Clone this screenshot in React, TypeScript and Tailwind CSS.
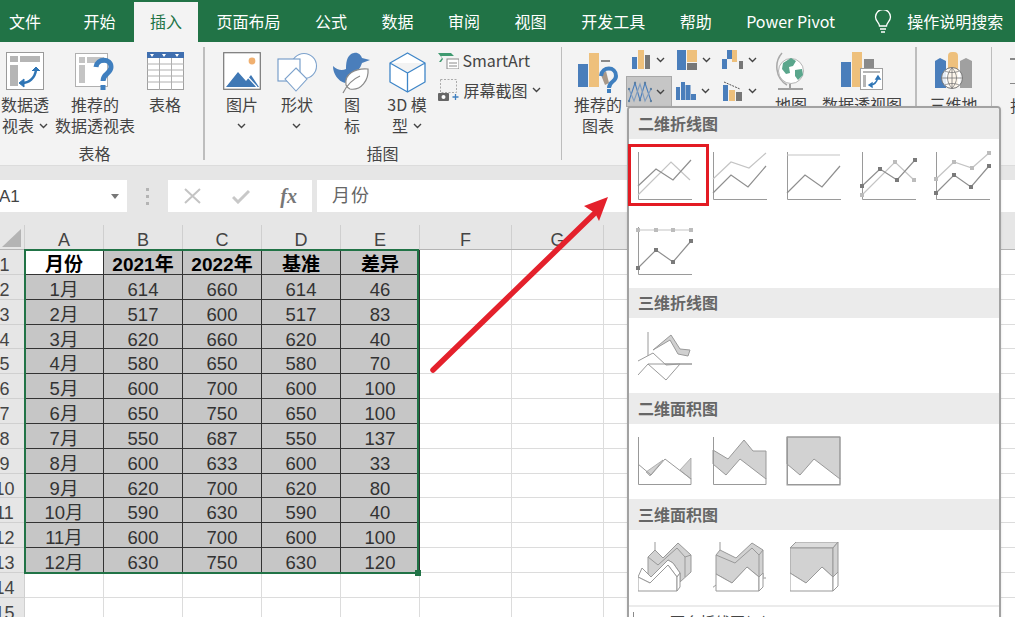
import type { ReactNode } from 'react';

const cjk = "font-['Noto_Sans_CJK_SC',sans-serif]";
const sheetFont = "font-['Liberation_Sans','Noto_Sans_CJK_SC',sans-serif]";

const BLUE = '#4a7ebb';
const ORANGE = '#eec07c';

const tabs = ['开始', '插入', '页面布局', '公式', '数据', '审阅', '视图', '开发工具', '帮助', 'Power Pivot'];

const rows = [
  ['1月', '614', '660', '614', '46'],
  ['2月', '517', '600', '517', '83'],
  ['3月', '620', '660', '620', '40'],
  ['4月', '580', '650', '580', '70'],
  ['5月', '600', '700', '600', '100'],
  ['6月', '650', '750', '650', '100'],
  ['7月', '550', '687', '550', '137'],
  ['8月', '600', '633', '600', '33'],
  ['9月', '620', '700', '620', '80'],
  ['10月', '590', '630', '590', '40'],
  ['11月', '600', '700', '600', '100'],
  ['12月', '630', '750', '630', '120'],
];

function Chev() {
  return (
    <svg width="9" height="6" viewBox="0 0 9 6" className="shrink-0">
      <path d="M1 1l3.5 3.5L8 1" fill="none" stroke="#444" strokeWidth="1.4" />
    </svg>
  );
}

function PivotIcon() {
  return (
    <svg width="38" height="39" viewBox="0 0 38 39">
      <rect x=".5" y=".5" width="37" height="37" fill="#fff" stroke="#9a9a9a" />
      <rect x="4" y="4" width="8" height="6" fill="#b5b5b5" />
      <rect x="14" y="4" width="20" height="6" fill="#b5b5b5" />
      <rect x="4" y="13" width="8" height="21" fill="#b5b5b5" />
      <path d="M16 31c7 0 13-5 14-13" fill="none" stroke="#2f75b5" strokeWidth="2.4" />
      <path d="M26 19l4-4 4 4M13 31l5-4v8z" fill="#2f75b5" stroke="#2f75b5" />
    </svg>
  );
}

function RecommendedPivotIcon() {
  return (
    <svg width="40" height="40" viewBox="0 0 40 40">
      <rect x=".5" y="1.5" width="32" height="33" fill="#fff" stroke="#b0b0b0" />
      <rect x="4" y="5" width="6" height="6" fill="#c4c4c4" />
      <rect x="12" y="5" width="17" height="6" fill="#c4c4c4" />
      <rect x="4" y="13" width="6" height="18" fill="#c4c4c4" />
      <path d="M21 15c1-9 15-9 15 0 0 7-8 6-8 14" fill="none" stroke="#3f7fbf" strokeWidth="5" />
      <rect x="25.5" y="33" width="5" height="5" fill="#3f7fbf" />
    </svg>
  );
}

function TableIcon() {
  return (
    <svg width="37" height="39" viewBox="0 0 37 39">
      <rect x=".5" y=".5" width="36" height="37" fill="#fff" stroke="#a0a0a0" />
      <rect x="0" y="0" width="37" height="6" fill="#3f6fb0" />
      <path d="M3 2h4L5 5zM15 2h4l-2 3zM28 2h4l-2 3z" fill="#fff" />
      <path d="M0 12h37M0 18h37M0 24h37M0 30h37M12.5 6v32M24.5 6v32" stroke="#b0b0b0" fill="none" />
    </svg>
  );
}

function PictureIcon() {
  return (
    <svg width="38" height="39" viewBox="0 0 38 39">
      <rect x=".7" y=".7" width="36.6" height="36.6" fill="#fff" stroke="#777" strokeWidth="1.2" />
      <circle cx="29" cy="9" r="3.4" fill="#f0b070" />
      <path d="M3 35l12-15 8 9 5-6 8 12z" fill="#3f78b5" />
      <path d="M22 22l12 13" stroke="#fff" strokeWidth="1.2" />
    </svg>
  );
}

function ShapesIcon() {
  return (
    <svg width="41" height="40" viewBox="0 0 41 40">
      <circle cx="27" cy="14" r="12.5" fill="#fff" stroke="#7da2cc" strokeWidth="1.1" />
      <rect x="1" y="7" width="22" height="22" fill="#fff" stroke="#6e97c6" strokeWidth="1.1" />
      <path d="M19 16l11 11-11 12L8 27z" fill="#fff" stroke="#7da2cc" strokeWidth="1.1" />
    </svg>
  );
}

function IconsIcon() {
  return (
    <svg width="38" height="42" viewBox="0 0 38 42">
      <path d="M0 14C4 18 9 19 13 17 13 8 15 2 21 1 25 0 28 3 29 6L37 8 29 11C28 14 27 16 25 18L12 31C5 29 0 22 0 14z" fill={BLUE} />
      <path d="M13 33C11 22 22 16 35 17 36 28 28 39 17 37 15 36 14 35 13 33z" fill="#fff" stroke="#8a8a8a" strokeWidth="1.2" />
      <path d="M10 41C14 33 20 27 27 24" fill="none" stroke="#8a8a8a" strokeWidth="1.2" />
    </svg>
  );
}

function CubeIcon() {
  return (
    <svg width="37" height="41" viewBox="0 0 37 41">
      <path d="M18.5 1L36 11v19L18.5 40 1 30V11zM1 11l17.500 10L36 11M18.500 21v19" fill="#fff" stroke="#3f86c8" strokeWidth="1.3" strokeLinejoin="round" />
    </svg>
  );
}

function SmartArtIcon() {
  return (
    <svg width="21" height="17" viewBox="0 0 21 17">
      <path d="M0 1h13l3 3H3l2 3-2 3H1l3-4z" fill="#3f9a70" />
      <rect x="9" y="7" width="12" height="10" fill="#fff" stroke="#8a8a8a" />
      <path d="M11 11h8M11 14h8" stroke="#8a8a8a" />
    </svg>
  );
}

function ScreenshotIcon() {
  return (
    <svg width="22" height="22" viewBox="0 0 22 22">
      <rect x="2.500" y=".5" width="16" height="13" fill="none" stroke="#aaa" strokeDasharray="2 1.500" />
      <rect x="0" y="14" width="11" height="8" rx="1" fill="#666" />
      <circle cx="5.500" cy="18" r="2" fill="#fff" />
      <path d="M17.500 15v6M14.500 18h6" stroke="#3f7fbf" strokeWidth="1.3" />
    </svg>
  );
}

function RecommendedChartIcon() {
  return (
    <svg width="42" height="42" viewBox="0 0 42 42">
      <rect x="1" y="12" width="10" height="23" fill={BLUE} />
      <rect x="12" y="1" width="10" height="34" fill={ORANGE} />
      <rect x="24" y="8" width="9" height="2" fill="#8a8a8a" />
      <path d="M24 23l5-4 3 12-4 2z" fill="#a89888" />
      <path d="M24 24c1-10 15-10 15 0 0 6-7 5-7 12" fill="none" stroke="#3f7fbf" strokeWidth="4" />
      <rect x="30" y="37" width="4" height="4" fill="#3f7fbf" />
    </svg>
  );
}

function MiniBars({ kind }: { kind: 'column' | 'tree' | 'water' | 'stat' | 'combo' }) {
  if (kind === 'column') {
    return (
      <svg width="18" height="20" viewBox="0 0 18 20" className="shrink-0">
        <rect x="0" y="7" width="5" height="12" fill={BLUE} />
        <rect x="6" y="0" width="6" height="19" fill={ORANGE} />
        <rect x="13" y="5" width="5" height="14" fill="#777" />
      </svg>
    );
  }
  if (kind === 'tree') {
    return (
      <svg width="20" height="20" viewBox="0 0 20 20" className="shrink-0">
        <rect x="0" y="0" width="9" height="20" fill={BLUE} />
        <rect x="10" y="0" width="10" height="12" fill={ORANGE} />
        <rect x="10" y="13" width="10" height="7" fill="#777" />
      </svg>
    );
  }
  if (kind === 'water') {
    return (
      <svg width="21" height="20" viewBox="0 0 21 20" className="shrink-0">
        <rect x="0" y="9" width="5" height="10" fill={BLUE} />
        <rect x="5" y="0" width="5" height="9" fill={BLUE} />
        <rect x="10" y="0" width="5" height="12" fill={ORANGE} />
        <rect x="17" y="11" width="4" height="8" fill="#777" />
      </svg>
    );
  }
  if (kind === 'stat') {
    return (
      <svg width="20" height="18" viewBox="0 0 20 18" className="shrink-0">
        <rect x="0" y="5" width="4" height="13" fill={BLUE} />
        <rect x="5" y="0" width="4" height="18" fill={BLUE} />
        <rect x="9.500" y="3" width="5" height="15" fill={BLUE} />
        <rect x="15" y="12" width="5" height="6" fill={BLUE} />
      </svg>
    );
  }
  return (
    <svg width="19" height="20" viewBox="0 0 19 20" className="shrink-0">
      <rect x="0" y="4" width="5" height="16" fill={BLUE} />
      <rect x="6" y="9" width="6" height="11" fill={ORANGE} />
      <rect x="13" y="11" width="6" height="9" fill="#777" />
      <path d="M1 1l16 7" stroke="#555" strokeDasharray="2 1" />
    </svg>
  );
}

function LineChartSmall() {
  return (
    <svg width="24" height="22" viewBox="0 0 24 22" className="shrink-0">
      <path d="M1 20L7 2l5 17 5-17 6 18" fill="none" stroke="#4a7ebb" strokeWidth="1.100" />
      <path d="M1 8l5 12L12 3l5 17 6-12" fill="none" stroke="#7f9cbe" strokeWidth="1.100" />
      <g fill="#5f7f9f">
        <circle cx="1" cy="20" r="1.200" />
        <circle cx="7" cy="2" r="1.200" />
        <circle cx="12" cy="19" r="1.200" />
        <circle cx="17" cy="2" r="1.200" />
        <circle cx="23" cy="20" r="1.200" />
        <circle cx="1" cy="8" r="1.200" />
        <circle cx="23" cy="8" r="1.200" />
      </g>
    </svg>
  );
}

function GlobeIcon() {
  return (
    <svg width="30" height="38" viewBox="0 0 30 38">
      <path d="M6 1C-2 10-1 26 11 33" fill="none" stroke="#a8a8a8" strokeWidth="1.500" />
      <circle cx="15" cy="19" r="12.500" fill="#fff" stroke="#b4b4b4" />
      <path d="M7 11l8-5 5 3-3 5-4 1 1 6-4 1-4-5zM19 18l7-1 1 6-5 5-3-4z" fill="#5aa68c" />
      <path d="M14 32v4M2 37h25" stroke="#a0a0a0" strokeWidth="2" />
    </svg>
  );
}

function PivotChartIcon() {
  return (
    <svg width="42" height="39" viewBox="0 0 42 39">
      <rect x="0" y="10" width="10" height="25" fill={BLUE} />
      <rect x="11" y="0" width="10" height="35" fill={ORANGE} />
      <rect x="23" y="7" width="10" height="9" fill="#8a8a8a" />
      <rect x="19.500" y="16.500" width="22" height="21" fill="#fff" stroke="#a0a0a0" />
      <path d="M22 19h17v2H22zM22 23h3v12h-3z" fill="#b5b5b5" />
      <path d="M29 33c4 0 7-3 8-8M28 33l3-2v4zM37 24l-2 3h4z" fill="none" stroke="#2f75b5" strokeWidth="1.400" />
    </svg>
  );
}

function MapsIcon() {
  return (
    <svg width="38" height="38" viewBox="0 0 38 38">
      <path d="M0 9l5-3 6 3v27H0z" fill={BLUE} />
      <rect x="13" y="0" width="10" height="36" rx="4" fill={ORANGE} />
      <path d="M25 9l6-3 6 3v27H25z" fill="#a0a0a0" />
      <circle cx="17" cy="26" r="10.500" fill="#fff" fillOpacity=".85" stroke="#777" />
      <path d="M7 26h20M17 16v20M10 19c4 2 10 2 14 0M10 33c4-2 10-2 14 0M17 16c-6 6-6 14 0 20M17 16c6 6 6 14 0 20" fill="none" stroke="#777" strokeWidth=".8" />
    </svg>
  );
}

function Sep() {
  return <div className="w-[1.5px] h-[113px] mt-[5px] bg-[#bdbdbd] shrink-0" />;
}

function RibbonButton({ icon, lines, chev, className }: { icon: ReactNode; lines: ReactNode[]; chev?: boolean; className: string }) {
  return (
    <div className={`flex flex-col items-center shrink-0 ${className}`}>
      <div className="h-[42px] flex items-start justify-center">{icon}</div>
      <div className="flex flex-col items-center text-[16px] leading-[21px] text-[#444] whitespace-nowrap">
        {lines.map((line, i) => (
          <span key={i} className="flex items-center gap-[5px]">{line}</span>
        ))}
        {chev && <span className="h-[21px] flex items-center"><Chev /></span>}
      </div>
    </div>
  );
}

function SmallChartBtn({ children, active, className }: { children: ReactNode; active?: boolean; className: string }) {
  return (
    <div className={`flex items-center w-[46px] shrink-0 ${active ? 'h-[31px] bg-[#c6c6c6] border border-[#a8a8a8]' : 'h-[30px]'} ${className}`}>
      {children}
      <Chev />
    </div>
  );
}

function GroupLabel({ children }: { children: ReactNode }) {
  return <div className="absolute bottom-[1px] inset-x-0 text-center text-[16px] leading-[22px] text-[#444]">{children}</div>;
}

function Ribbon() {
  return (
    <div className={`h-[124px] bg-[#f3f3f3] border-b border-[#dcdcdc] flex items-start overflow-hidden ${cjk}`}>
      <div className="relative h-[123px] w-[217px] ml-[-14px] pl-[14px] pt-[10px] flex shrink-0">
        <RibbonButton className="w-[50px]" icon={<PivotIcon />} lines={['数据透', <>视表<Chev /></>]} />
        <RibbonButton className="w-[80px] ml-[5px]" icon={<RecommendedPivotIcon />} lines={['推荐的', '数据透视表']} />
        <RibbonButton className="w-[60px]" icon={<TableIcon />} lines={['表格']} />
        <GroupLabel>表格</GroupLabel>
      </div>
      <Sep />
      <div className="relative h-[123px] w-[356px] pl-[10px] pt-[10px] flex shrink-0">
        <RibbonButton className="w-[55px]" icon={<PictureIcon />} lines={['图片']} chev />
        <RibbonButton className="w-[55px]" icon={<ShapesIcon />} lines={['形状']} chev />
        <RibbonButton className="w-[55px]" icon={<IconsIcon />} lines={['图', '标']} />
        <RibbonButton className="w-[55px]" icon={<CubeIcon />} lines={['3D 模', <>型<Chev /></>]} />
        <div className="ml-[3px] mt-[-3px] flex flex-col gap-[8px] text-[16px] leading-[22px] text-[#444] whitespace-nowrap">
          <div className="flex items-center gap-[4px] h-[22px]"><SmartArtIcon />SmartArt</div>
          <div className="flex items-center gap-[4px] h-[22px]"><ScreenshotIcon />屏幕截图<Chev /></div>
        </div>
        <GroupLabel>插图</GroupLabel>
      </div>
      <Sep />
      <div className="relative h-[123px] w-[353px] pl-[11px] pt-[10px] flex shrink-0">
        <RibbonButton className="w-[50px]" icon={<RecommendedChartIcon />} lines={['推荐的', '图表']} />
        <div className="w-[138px] ml-[3px] mt-[-7px] flex flex-wrap content-start gap-y-[1px] shrink-0">
          <SmallChartBtn className="pl-[6px] gap-[6px]"><MiniBars kind="column" /></SmallChartBtn>
          <SmallChartBtn className="pl-[5px] gap-[5px]"><MiniBars kind="tree" /></SmallChartBtn>
          <SmallChartBtn className="pl-[4px] gap-[5px]"><MiniBars kind="water" /></SmallChartBtn>
          <SmallChartBtn active className="pl-[1px] gap-[4px]"><LineChartSmall /></SmallChartBtn>
          <SmallChartBtn className="pl-[4px] gap-[5px]"><MiniBars kind="stat" /></SmallChartBtn>
          <SmallChartBtn className="pl-[5px] gap-[6px]"><MiniBars kind="combo" /></SmallChartBtn>
        </div>
        <RibbonButton className="w-[42px] ml-[6px]" icon={<GlobeIcon />} lines={['地图']} />
        <RibbonButton className="w-[80px] ml-[10px]" icon={<PivotChartIcon />} lines={['数据透视图']} />
      </div>
      <Sep />
      <div className="w-[74px] pt-[10px] shrink-0">
        <RibbonButton className="w-full" icon={<MapsIcon />} lines={['三维地']} />
      </div>
      <Sep />
      <div className="ml-[18px] pt-[16px] flex flex-col shrink-0">
        <div className="w-[8px] h-[1.5px] bg-[#888]" />
        <div className="w-[8px] h-[1.5px] bg-[#888] mt-[23px]" />
        <div className="mt-[11px] text-[16px] leading-[21px] text-[#444] whitespace-nowrap">折线</div>
      </div>
    </div>
  );
}

function FormulaBar() {
  return (
    <div className={`h-[59px] bg-[#e6e6e6] pt-[14px] flex items-start ${sheetFont}`}>
      <div className="w-[127px] h-[32px] bg-white flex items-center justify-between pt-[1px] pr-[8px] text-[17px] text-[#444]">
        <span className="ml-[-1px]">A1</span>
        <svg width="8" height="5" viewBox="0 0 8 5"><path d="M0 0h8L4 5z" fill="#777" /></svg>
      </div>
      <div className="w-[41px] h-[32px] flex flex-col items-center justify-center gap-[4px]">
        <span className="w-[3px] h-[3px] bg-[#b4b4b4]" />
        <span className="w-[3px] h-[3px] bg-[#b4b4b4]" />
        <span className="w-[3px] h-[3px] bg-[#b4b4b4]" />
      </div>
      <div className="w-[144px] h-[32px] bg-white flex items-center justify-between pl-[16px] pr-[15px]">
        <svg width="17" height="16" viewBox="0 0 17 16"><path d="M1 1l15 14M16 1L1 15" stroke="#c4c4c4" strokeWidth="2" /></svg>
        <svg width="18" height="15" viewBox="0 0 18 15"><path d="M1 8l5 5L17 2" fill="none" stroke="#c8c8c8" strokeWidth="3" /></svg>
        <span className="font-['Liberation_Serif',serif] italic font-bold text-[20px] leading-[20px] text-[#777]">fx</span>
      </div>
      <div className="ml-[5px] flex-1 h-[32px] bg-white flex items-center pl-[15px] text-[18px] tracking-[1px] text-[#666]">月份</div>
    </div>
  );
}

function ColumnHeaders() {
  const cols = ['A', 'B', 'C', 'D', 'E'];
  // H onward sit behind the chart popup, and the next letter would only show clipped
  const wide = ['F', 'G', 'H', 'I', 'J', 'K', ''];
  return (
    <div className="h-[25px] flex bg-[#e6e6e6] border-b border-[#b4b4b4] text-[18px] leading-[30px] text-[#444]">
      <div className="w-[25px] shrink-0 border-r border-[#cfcfcf] flex items-end justify-center pb-[2px]">
        <svg width="20" height="18" viewBox="0 0 20 18"><path d="M19 0v18H0z" fill="#b4b4b4" /></svg>
      </div>
      {cols.map((c) => (
        <div key={c} className="w-[79px] shrink-0 text-center border-r border-[#cfcfcf]">{c}</div>
      ))}
      {wide.map((c) => (
        <div key={c} className="w-[92px] shrink-0 text-center border-r border-[#cfcfcf]">{c}</div>
      ))}
    </div>
  );
}

function RowHeader({ n }: { n: number }) {
  return (
    <div className="w-[25px] shrink-0 bg-[#e6e6e6] border-b border-r border-[#d0d0d0] pr-[15px] flex justify-center text-[18px] text-[#444] whitespace-nowrap">
      {n}
    </div>
  );
}

function BlankCells({ count }: { count: number }) {
  return (
    <>
      {Array.from({ length: count }).map((_, i) => (
        <div key={i} className="w-[92px] shrink-0 border-r-[1.5px] border-b-[1.5px] border-[#dcdcdc]" />
      ))}
    </>
  );
}

function Cell({ children, head, white }: { children: ReactNode; head?: boolean; white?: boolean }) {
  return (
    <div className={`w-[79px] shrink-0 text-center border-r-[1.5px] border-b-[1.5px] border-[#333] ${white ? 'bg-white' : 'bg-[#c6c6c6]'} ${head ? 'font-bold text-[19px] text-black' : 'text-[18.5px] text-[#333]'}`}>
      {children}
    </div>
  );
}

function Sheet() {
  const head = ['月份', '2021年', '2022年', '基准', '差异'];
  return (
    <div className={`${sheetFont} bg-white`}>
      <ColumnHeaders />
      <div className="relative">
        <div className="h-[24.85px] flex leading-[30px]">
          <RowHeader n={1} />
          {head.map((h, i) => <Cell key={h} head white={i === 0}>{h}</Cell>)}
          <BlankCells count={7} />
        </div>
        {rows.map((r, i) => (
          <div key={r[0]} className="h-[24.85px] flex leading-[30px]">
            <RowHeader n={i + 2} />
            {r.map((v, j) => <Cell key={j}>{v}</Cell>)}
            <BlankCells count={7} />
          </div>
        ))}
        {[14, 15].map((n) => (
          <div key={n} className="h-[24.85px] flex leading-[30px]">
            <RowHeader n={n} />
            {Array.from({ length: 5 }).map((_, i) => (
              <div key={i} className="w-[79px] shrink-0 border-r-[1.5px] border-b-[1.5px] border-[#dcdcdc]" />
            ))}
            <BlankCells count={7} />
          </div>
        ))}
        <div className="absolute left-[24px] top-[-1px] w-[395px] h-[325px] border-2 border-[#217346] pointer-events-none">
          <div className="absolute right-[-4px] bottom-[-4px] w-[6px] h-[6px] bg-[#217346]" />
        </div>
      </div>
    </div>
  );
}

function Axes() {
  return <path d="M.5 0v47.500H54" fill="none" stroke="#9a9a9a" strokeWidth="1" />;
}

function Markers({ pts, fill }: { pts: number[][]; fill: string }) {
  return (
    <>
      {pts.map(([x, y], i) => (
        <rect key={i} x={x - 2} y={y - 2} width="4" height="4" fill={fill} />
      ))}
    </>
  );
}

const toPoints = (pts: number[][]) => pts.map((p) => p.join(',')).join(' ');

function LineIcon({ dark, light, marked }: { dark: number[][]; light: number[][]; marked?: boolean }) {
  return (
    <svg width="55" height="50" viewBox="-1 -1 55 50" className="overflow-visible">
      <Axes />
      <polyline points={toPoints(light)} fill="none" stroke="#c4c4c4" strokeWidth="1.200" />
      <polyline points={toPoints(dark)} fill="none" stroke="#8f8f8f" strokeWidth="1.200" />
      {marked && <Markers pts={light} fill="#bcbcbc" />}
      {marked && <Markers pts={dark} fill="#7a7a7a" />}
    </svg>
  );
}

function Line3DIcon() {
  return (
    <svg width="55" height="50" viewBox="0 0 55 50">
      <path d="M10 0v32H54" fill="none" stroke="#9a9a9a" />
      <path d="M15 18L33 3l9 14 10 1-2 6-10-2-8-14z" fill="#d0d0d0" stroke="#9a9a9a" />
      <path d="M0 29l15-8 13 12 14-1-14 16-18-16L0 43" fill="#fff" stroke="#9a9a9a" />
      <path d="M10 32h44" stroke="#9a9a9a" />
    </svg>
  );
}

function AreaIcon({ kind }: { kind: 1 | 2 | 3 }) {
  const G = '#d2d2d2';
  const S = '#999';
  return (
    <svg width="55" height="50" viewBox="-1 -1 55 50" className="overflow-visible">
      {kind === 1 && (
        <>
          <polygon points="8,35 25,23 12,39" fill={G} stroke={S} strokeWidth=".7" />
          <polygon points="42,33 53,21 53,42" fill={G} stroke={S} strokeWidth=".7" />
          <path d="M0 27l13 11L27 22l26 20" fill="none" stroke={S} />
        </>
      )}
      {kind === 2 && <polygon points="0,13 15,22 31,3 40,14 53,14 53,42 27,22 13,38 0,27" fill={G} stroke={S} />}
      {kind === 3 && (
        <>
          <polygon points="0,0 53,0 53,42 27,22 13,38 0,27" fill={G} stroke={S} />
          <rect x="0" y="0" width="53" height="48" fill="none" stroke={S} />
        </>
      )}
      <path d="M.5 0v47.500H53v-6" fill="none" stroke={S} />
    </svg>
  );
}

function Area3DIcon({ kind }: { kind: 1 | 2 | 3 }) {
  const G = '#d2d2d2';
  const S = '#999';
  return (
    <svg width="55" height="52" viewBox="0 0 55 52">
      {kind === 1 && (
        <>
          <path d="M17 0v9" stroke={S} />
          <polygon points="10,15 17,8 25,16 40,1 53,13 53,30 42,40 42,31 35,21 30,18 13,35 10,32" fill={G} stroke={S} />
          <path d="M10 15l10 8 19-17 8 9 6-2M47 15v20" fill="none" stroke={S} />
          <polygon points="0,35 4,26 13,35 30,18 35,21 42,31 39,35 30,23 12,41" fill="#fff" stroke={S} />
          <polygon points="0,35 12,41 30,23 39,35 39,49 0,49" fill="#fff" stroke={S} />
          <polygon points="39,35 42,31 42,45 39,49" fill="#fff" stroke={S} />
        </>
      )}
      {kind === 2 && (
        <>
          <path d="M7 0v8M-1 46l4-3M50 36h3" stroke={S} />
          <polygon points="3,13 7,8 23,16 39,1 50,8 50,35 46,35 34,25 19,41 3,32" fill={G} stroke={S} />
          <path d="M3 13l19 8 17-15 7 7v22M46 13l4-5" fill="none" stroke={S} />
          <polygon points="3,32 19,41 34,25 46,35 46,49 3,49" fill="#fff" stroke={S} />
          <polygon points="46,35 50,31 50,45 46,49" fill="#fff" stroke={S} />
        </>
      )}
      {kind === 3 && (
        <>
          <polygon points="0,6 6,0 48,0 43,6" fill="#dcdcdc" stroke={S} />
          <polygon points="0,6 43,6 43,35 32,25 16,41 0,31" fill={G} stroke={S} />
          <polygon points="43,6 48,0 48,30 43,35" fill={G} stroke={S} />
          <polygon points="0,31 16,41 32,25 43,35 43,49 0,49" fill="#fff" stroke={S} />
          <polygon points="43,35 48,30 48,44 43,49" fill="#fff" stroke={S} />
        </>
      )}
    </svg>
  );
}

function SectionHead({ children, className }: { children: ReactNode; className: string }) {
  return (
    <div className={`bg-[#ebebeb] pl-[9px] pb-[2px] flex items-center text-[16px] font-bold text-[#666] ${className}`}>
      {children}
    </div>
  );
}

function ChartPopup() {
  const d1 = [[0, 34], [18, 17], [35, 28], [53, 8]];
  const l1 = [[0, 43], [33, 10], [52, 28]];
  const d2 = [[0, 41], [18, 23], [35, 35], [53, 14]];
  const l2 = [[0, 27], [18, 10], [36, 16], [53, 1]];
  return (
    <div className={`absolute left-[627px] top-[106px] w-[374px] h-[520px] bg-white border-2 border-[#a2a2a2] rounded-t-[4px] shadow-sm ${cjk}`}>
      <SectionHead className="h-[31px] rounded-t-[2px]">二维折线图</SectionHead>
      <div className="h-[149px] pl-[8px] pt-[12px] flex flex-wrap content-start gap-x-[19.500px] gap-y-[25px]">
        <div className="relative w-[55px] h-[50px]">
          <LineIcon dark={d1} light={l1} />
          <div className="absolute left-[-9px] top-[-7px] w-[81px] h-[62px] border-[3px] border-[#e31b23]" />
        </div>
        <LineIcon dark={d2} light={l2} />
        <LineIcon dark={d2} light={[[0, 3], [53, 3]]} />
        <LineIcon dark={d1} light={l1} marked />
        <LineIcon dark={d2} light={l2} marked />
        <LineIcon dark={d2} light={[[0, 3], [18, 3], [35, 3], [53, 3]]} marked />
      </div>
      <SectionHead className="h-[30px]">三维折线图</SectionHead>
      <div className="h-[75px] pl-[9px] pt-[14px]"><Line3DIcon /></div>
      <SectionHead className="h-[31px]">二维面积图</SectionHead>
      <div className="h-[75px] pl-[8px] pt-[12px] flex gap-x-[19.500px]">
        <AreaIcon kind={1} />
        <AreaIcon kind={2} />
        <AreaIcon kind={3} />
      </div>
      <SectionHead className="h-[31px]">三维面积图</SectionHead>
      <div className="h-[75px] pl-[9px] pt-[12px] flex">
        <Area3DIcon kind={1} />
        <div className="ml-[20px]"><Area3DIcon kind={2} /></div>
        <div className="ml-[22px]"><Area3DIcon kind={3} /></div>
      </div>
      <div className="border-t-2 border-[#ebebeb] pt-[5px] pl-[4px] flex items-start gap-[13px] text-[15px] leading-[20px] text-[#444]">
        <svg width="24" height="20" viewBox="0 0 24 20"><path d="M.5 0v20M8 12l5-6 4 6" fill="none" stroke="#8a8a8a" /></svg>
        更多折线图(M)...
      </div>
    </div>
  );
}

function Arrow() {
  return (
    <svg className="absolute left-[425px] top-[190px] pointer-events-none" width="190" height="190" viewBox="0 0 190 190">
      <path d="M8 180L172 21" stroke="#e4212c" strokeWidth="5.500" strokeLinecap="round" fill="none" />
      <path d="M183 7l-24 9 11 7 4 8z" fill="#e4212c" />
    </svg>
  );
}

export default function App() {
  return (
    <div className="relative w-[1015px] h-[617px] overflow-hidden bg-white">
      <div className={`h-[42px] bg-[#217346] flex items-end gap-[2.500px] text-[16px] text-white ${cjk}`}>
        <div className="ml-[-7px] mr-[8px] h-[40px] pb-[2px] px-4 flex items-center shrink-0">文件</div>
        {tabs.map((t) => (
          <div key={t} className={`h-[40px] pb-[2px] px-4 flex items-center shrink-0 whitespace-nowrap ${t === '插入' ? 'bg-[#f3f3f3] text-[#217346]' : ''}`}>
            {t}
          </div>
        ))}
        <div className="ml-[20px] h-[40px] flex items-center shrink-0">
          <svg width="18" height="24" viewBox="0 0 18 24">
            <path d="M5.500 16c0-3-4-5-4-9a7.500 7.500 0 0 1 15 0c0 4-4 6-4 9zM6 19h6M7 22h4" fill="none" stroke="#fff" strokeWidth="1.300" />
          </svg>
        </div>
        <div className="ml-[13px] h-[40px] pb-[2px] flex items-center shrink-0 whitespace-nowrap">操作说明搜索</div>
      </div>
      <Ribbon />
      <FormulaBar />
      <Sheet />
      <ChartPopup />
      <Arrow />
    </div>
  );
}
